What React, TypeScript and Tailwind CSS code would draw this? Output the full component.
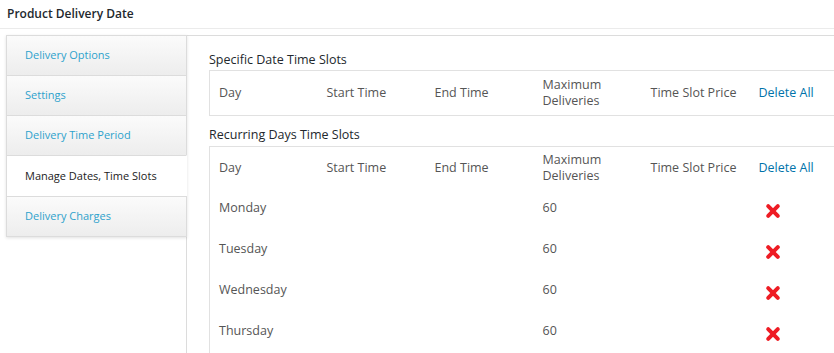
import React from "react";

const tabs = [
  { label: "Delivery Options", h: "h-[40px]" },
  { label: "Settings", h: "h-[40px]" },
  { label: "Delivery Time Period", h: "h-[40px]" },
  { label: "Manage Dates, Time Slots", h: "h-[41px]", active: true },
  { label: "Delivery Charges", h: "h-[41px]", last: true },
];

const headers = ["Day", "Start Time", "End Time", "Maximum Deliveries", "Time Slot Price"];

function RedX() {
  return (
    <svg width="16" height="16" viewBox="0 0 16 16" className="block ml-[6px] mt-[4px]">
      <path d="M3.2 3.2 L12.8 12.8 M12.8 3.2 L3.2 12.8" stroke="#ee1c24" strokeWidth="4" strokeLinecap="round" />
    </svg>
  );
}

function HeaderRow({ h }: { h: string }) {
  return (
    <tr>
      {headers.map((t) => (
        <th
          key={t}
          className={`${h} pl-[9px] pr-[4px] text-left align-middle font-normal text-[12.5px] leading-[16px] text-[#555]`}
        >
          {t === "Maximum Deliveries" ? (
            <>
              Maximum
              <br />
              Deliveries
            </>
          ) : (
            t
          )}
        </th>
      ))}
      <th className={`${h} pl-[9px] text-left align-middle font-normal text-[12.5px] leading-[16px] text-[#0073aa]`}>
        Delete All
      </th>
    </tr>
  );
}

const days = ["Monday", "Tuesday", "Wednesday", "Thursday"];

function Cols() {
  return (
    <colgroup>
      <col className="w-[108px]" />
      <col className="w-[108px]" />
      <col className="w-[108px]" />
      <col className="w-[108px]" />
      <col className="w-[108px]" />
      <col className="w-[110px]" />
    </colgroup>
  );
}

export default function App() {
  return (
    <div
      className="w-[834px] h-[353px] overflow-hidden bg-white"
      style={{ fontFamily: '"Open Sans", "Liberation Sans", sans-serif' }}
    >
      <div className="h-[29px] border-b border-[#ebebeb] pl-[7px] flex items-center">
        <span className="text-[12px] font-semibold text-[#23282d] leading-[18px]">Product Delivery Date</span>
      </div>
      <div className="flex items-start mt-[6px] ml-[6px]">
        <div className="relative z-10 w-[181px] shrink-0 shadow-[0_1px_3px_rgba(0,0,0,0.12)]">
          {tabs.map((t) => (
            <div
              key={t.label}
              className={`${t.h} flex items-center pl-[18px] text-[11px] border-t border-l border-[#dcdcdc] ${
                t.last ? "border-b" : ""
              } ${
                t.active
                  ? "bg-white border-r border-r-white text-[#222]"
                  : "border-r bg-gradient-to-b from-[#fbfbfb] to-[#ededed] text-[#2ea2cc]"
              }`}
            >
              {t.label}
            </div>
          ))}
        </div>
        <div className="-ml-[1px] flex-1 min-w-0 h-[320px] border-t border-l border-[#dcdcdc] pl-[22px] pt-[15px]">
          <div className="text-[12.5px] leading-[18px] text-[#23282d]">Specific Date Time Slots</div>
          <table className="mt-[1px] w-[650px] table-fixed border-collapse border border-[#e1e1e1]">
            <Cols />
            <thead>
              <HeaderRow h="h-[45px]" />
            </thead>
          </table>
          <div className="mt-[10px] text-[12.5px] leading-[18px] text-[#23282d]">Recurring Days Time Slots</div>
          <table className="mt-[2px] w-[650px] table-fixed border-collapse border border-[#e1e1e1]">
            <Cols />
            <thead>
              <HeaderRow h="h-[43px]" />
            </thead>
            <tbody>
              {days.map((d) => (
                <tr key={d}>
                  <td className="h-[41px] pl-[9px] pt-[9px] align-top text-[12.5px] leading-[17px] text-[#555]">{d}</td>
                  <td className="h-[41px] pl-[9px] pt-[9px] align-top"></td>
                  <td className="h-[41px] pl-[9px] pt-[9px] align-top"></td>
                  <td className="h-[41px] pl-[9px] pt-[9px] align-top text-[12.5px] leading-[17px] text-[#555]">60</td>
                  <td className="h-[41px] pl-[9px] pt-[9px] align-top"></td>
                  <td className="h-[41px] pl-[9px] pt-[9px] align-top">
                    <RedX />
                  </td>
                </tr>
              ))}
            </tbody>
          </table>
        </div>
      </div>
    </div>
  );
}
